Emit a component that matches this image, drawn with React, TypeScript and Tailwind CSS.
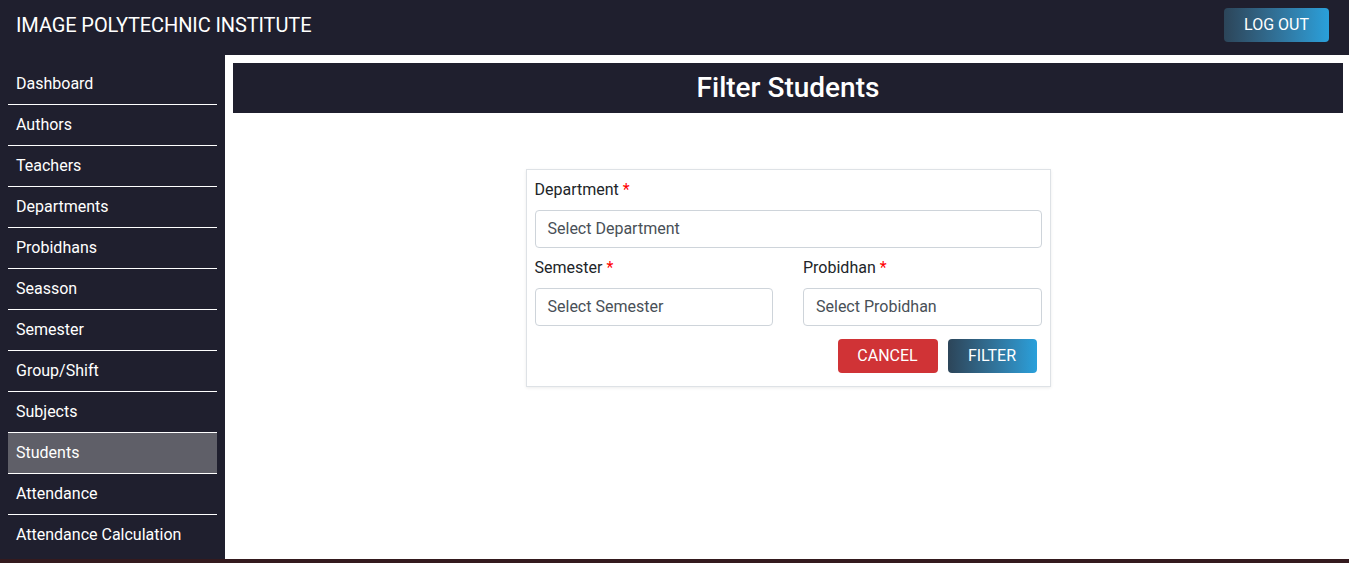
import React from 'react';

const menu = [
  'Dashboard',
  'Authors',
  'Teachers',
  'Departments',
  'Probidhans',
  'Seasson',
  'Semester',
  'Group/Shift',
  'Subjects',
  'Students',
  'Attendance',
  'Attendance Calculation',
];

const Label = ({ text }: { text: string }) => (
  <label className="block text-[16px] leading-6 text-[#212529]">
    {text} <span className="text-[#ff0000]">*</span>
  </label>
);

const SelectBox = ({ placeholder }: { placeholder: string }) => (
  <div className="h-[38px] w-full rounded-[4px] border border-[#ced4da] bg-white px-3 flex items-center text-[16px] text-[#495057]">
    {placeholder}
  </div>
);

const App = () => {
  return (
    <div className="min-h-screen bg-[#1f1f2e] font-['Roboto','Liberation_Sans',sans-serif]">
      {/* Top bar */}
      <header className="h-[55px] flex items-center justify-between pl-4 pr-5">
        <h1 className="text-[20px] tracking-[-0.1px] text-white -mt-[6px]">IMAGE POLYTECHNIC INSTITUTE</h1>
        <button className="h-[34px] w-[105px] -mt-[6px] rounded-[4px] bg-gradient-to-r from-[#2c4559] to-[#29a0db] text-white text-[16px]">
          LOG OUT
        </button>
      </header>

      <div className="flex h-[504px]">
        {/* Sidebar */}
        <aside className="w-[225px] shrink-0 px-2 pt-[9px]">
          {menu.map((item, i) => (
            <div
              key={item}
              className={`flex items-center px-2 text-[16px] text-white ${
                i < menu.length - 1 ? 'h-[41px] border-b border-white' : 'h-[39px]'
              } ${item === 'Students' ? 'bg-[#5f5f68]' : ''}`}
            >
              {item}
            </div>
          ))}
        </aside>

        {/* Main content */}
        <main className="flex-1 bg-white pl-2 pr-[6px] pt-2">
          <div className="h-[50px] bg-[#1f1f2e] flex items-center justify-center">
            <h2 className="text-[28px] font-medium text-white">Filter Students</h2>
          </div>

          <div className="mx-auto mt-[56px] w-[525px] border border-[#dee2e6] shadow-[0_1px_3px_rgba(0,0,0,0.08)] px-2 pt-2 pb-[13px]">
            <Label text="Department" />
            <div className="mt-[8px]">
              <SelectBox placeholder="Select Department" />
            </div>
            <div className="mt-[8px] grid grid-cols-2 gap-[30px]">
              <div>
                <Label text="Semester" />
                <div className="mt-[8px]">
                  <SelectBox placeholder="Select Semester" />
                </div>
              </div>
              <div>
                <Label text="Probidhan" />
                <div className="mt-[8px]">
                  <SelectBox placeholder="Select Probidhan" />
                </div>
              </div>
            </div>
            <div className="mt-[13px] flex justify-end gap-[10px] pr-[5px]">
              <button className="h-[34px] w-[100px] rounded-[4px] bg-[#d03336] text-white text-[16px]">CANCEL</button>
              <button className="h-[34px] w-[89px] rounded-[4px] bg-gradient-to-r from-[#2c4559] to-[#29a0db] text-white text-[16px]">
                FILTER
              </button>
            </div>
          </div>
        </main>
      </div>

      <footer className="h-[40px] bg-[#341a1e]" />
    </div>
  );
};

export default App;
